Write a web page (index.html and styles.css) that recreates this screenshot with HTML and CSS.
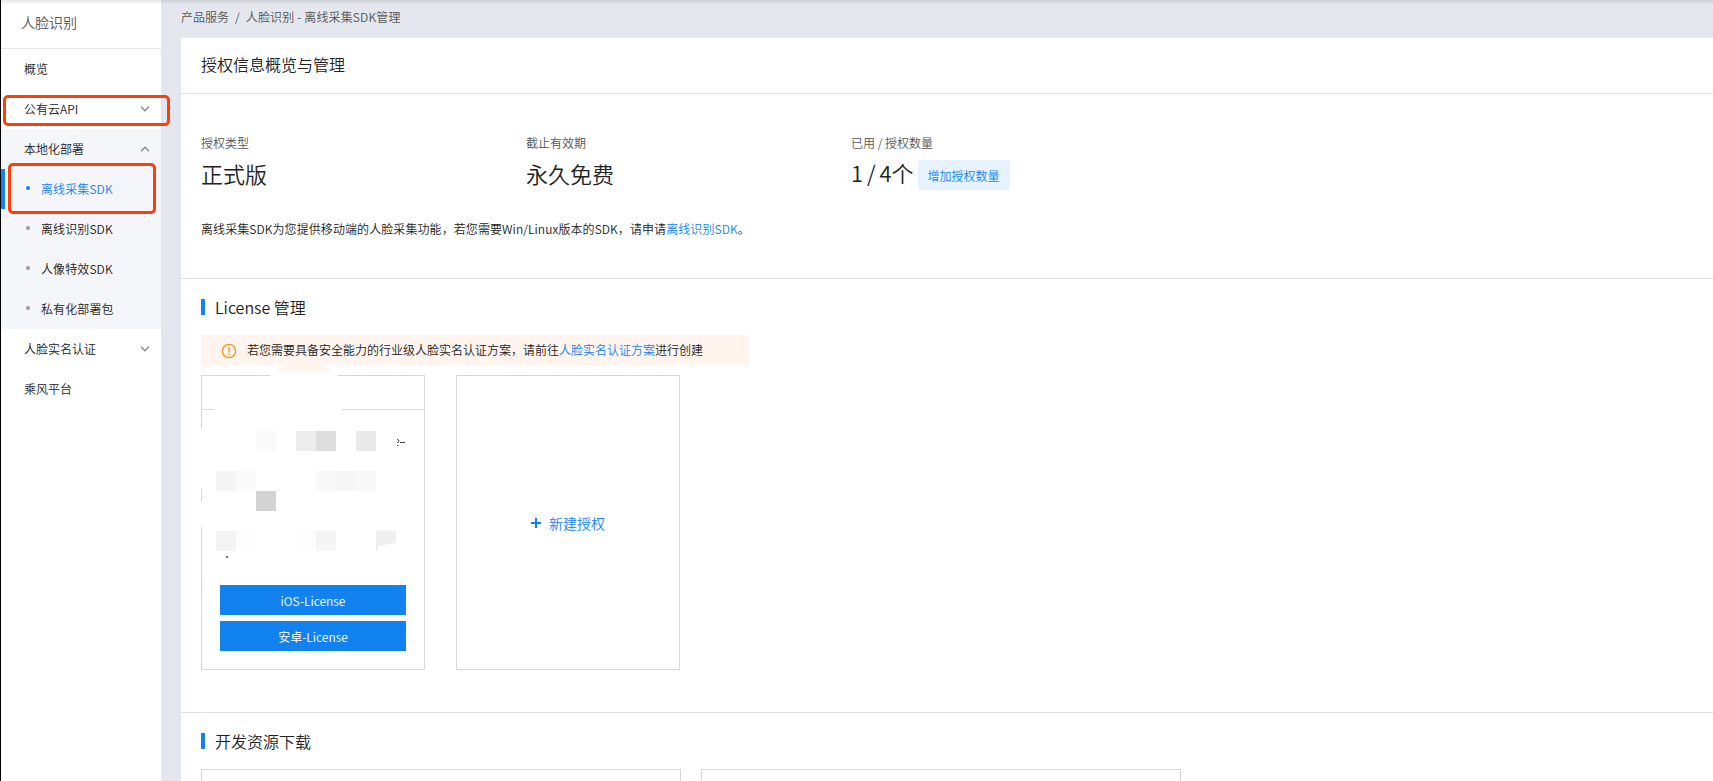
FILE: index.html
```html
<!DOCTYPE html>
<html lang="zh-CN">
<head>
    <meta charset="UTF-8">
    <meta name="viewport" content="width=device-width, initial-scale=1.0">
    <title>离线采集SDK管理</title>
    <link rel="stylesheet" href="styles.css">
</head>
<body>
    <div class="layout">
        <aside class="sidebar">
            <div class="sidebar-title">人脸识别</div>
            <ul class="menu">
                <li class="menu-item">概览</li>
                <li class="menu-item">公有云API
                    <svg class="arrow" width="10" height="6" viewBox="0 0 10 6"><path d="M1 0.8l4 4 4-4"/></svg>
                    <span class="mark mark-api"></span>
                </li>
                <li class="menu-group">
                    <div class="menu-item">本地化部署
                        <svg class="arrow" width="10" height="6" viewBox="0 0 10 6"><path d="M1 5.2l4-4 4 4"/></svg>
                    </div>
                    <ul class="submenu">
                        <li class="active">离线采集SDK<span class="mark mark-sdk"></span></li>
                        <li>离线识别SDK</li>
                        <li>人像特效SDK</li>
                        <li>私有化部署包</li>
                    </ul>
                </li>
                <li class="menu-item">人脸实名认证
                    <svg class="arrow" width="10" height="6" viewBox="0 0 10 6"><path d="M1 0.8l4 4 4-4"/></svg>
                </li>
                <li class="menu-item">乘风平台</li>
            </ul>
        </aside>

        <main class="main">
            <div class="breadcrumb"><span>产品服务</span><span>/</span><span class="current">人脸识别 - 离线采集SDK管理</span></div>
            <div class="content">
                <h2 class="page-title">授权信息概览与管理</h2>

                <section class="overview">
                    <div class="stats">
                        <div class="stat">
                            <div class="stat-label">授权类型</div>
                            <div class="stat-value">正式版</div>
                        </div>
                        <div class="stat">
                            <div class="stat-label">截止有效期</div>
                            <div class="stat-value">永久免费</div>
                        </div>
                        <div class="stat">
                            <div class="stat-label">已用 / 授权数量</div>
                            <div class="stat-value stat-count"><span class="count">1 / 4个</span><button class="btn-light">增加授权数量</button></div>
                        </div>
                    </div>
                    <p class="desc">离线采集SDK为您提供移动端的人脸采集功能，若您需要Win/Linux版本的SDK，请申请<a>离线识别SDK</a>。</p>
                </section>

                <section class="license">
                    <h3 class="section-title">License 管理</h3>
                    <div class="notice">
                        <svg class="notice-icon" width="16" height="16" viewBox="0 0 16 16">
                            <circle cx="8" cy="8" r="6.6"/>
                            <path d="M8 4v5.6M8 10.6v1.4"/>
                        </svg>
                        <span>若您需要具备安全能力的行业级人脸实名认证方案，请前往<a>人脸实名认证方案</a>进行创建</span>
                    </div>
                    <div class="cards">
                        <div class="card">
                            <div class="card-head"></div>
                            <!-- masked license info -->
                            <svg class="mask" width="224" height="220" viewBox="0 0 224 220">
                                <path fill="#fff" d="M69 10h68v4l4 20v14H13V34l56-16zM0 64h12v60H0zM0 137h12v25H0z"/>
                                <path fill="#fff5ee" d="M74 6C82 1 87 0 92 0h22c6 0 12 2 18 6z"/>
                                <g>
                                    <rect x="55" y="66" width="20" height="20" fill="#fafafa"/>
                                    <rect x="95" y="66" width="20" height="20" fill="#ededed"/>
                                    <rect x="115" y="66" width="20" height="20" fill="#dddddd"/>
                                    <rect x="155" y="66" width="20" height="20" fill="#e9e9e9"/>
                                    <rect x="15" y="106" width="20" height="20" fill="#f5f5f5"/>
                                    <rect x="35" y="106" width="20" height="20" fill="#fafafa"/>
                                    <rect x="115" y="106" width="20" height="20" fill="#f8f8f8"/>
                                    <rect x="135" y="106" width="20" height="20" fill="#f6f6f6"/>
                                    <rect x="155" y="106" width="20" height="20" fill="#f8f8f8"/>
                                    <rect x="55" y="126" width="20" height="20" fill="#d3d3d3"/>
                                    <rect x="15" y="166" width="20" height="20" fill="#f4f4f4"/>
                                    <rect x="35" y="166" width="20" height="20" fill="#fdfdfd"/>
                                    <rect x="95" y="166" width="20" height="20" fill="#fdfdfd"/>
                                    <rect x="115" y="166" width="20" height="20" fill="#f5f5f5"/>
                                    <path d="M175 166h20v12l-18 3v5h-2z" fill="#efefef"/>
                                </g>
                                <path d="M196 74.500h1l1 1.500-1 1.500h-1M196 80.500h1.500M199 77.500h5" fill="none" stroke="#444"/>
                                <rect x="25" y="191" width="2" height="2" fill="#777"/>
                            </svg>
                            <div class="card-actions">
                                <button class="btn-primary">iOS-License</button>
                                <button class="btn-primary">安卓-License</button>
                            </div>
                        </div>
                        <div class="card card-new">
                            <svg width="10" height="10" viewBox="0 0 10 10"><path d="M5 0v10M0 5h10"/></svg>
                            <span>新建授权</span>
                        </div>
                    </div>
                </section>

                <section class="download">
                    <h3 class="section-title">开发资源下载</h3>
                    <div class="resources">
                        <div class="resource"></div>
                        <div class="resource"></div>
                    </div>
                </section>
            </div>
        </main>
    </div>
</body>
</html>
```
FILE: styles.css
```css
* {
    box-sizing: border-box;
}
body {
    margin: 0;
    font-family: "Noto Sans CJK SC", sans-serif;
    font-size: 12px;
    font-weight: 350;
    color: #222;
    background-color: #e4e7ed;
    overflow: hidden;
}
ul, h2, h3, p {
    margin: 0;
    padding: 0;
    list-style: none;
    font-weight: inherit;
}
a {
    color: #1283ee;
}
button {
    border: none;
    padding: 0;
    font: inherit;
    cursor: pointer;
}
.layout {
    display: flex;
    height: 781px;
    border-left: 1px solid #000;
    overflow: hidden;
}
/* shadow of the top bar */
.layout::before {
    content: "";
    position: absolute;
    top: 0;
    left: 1px;
    right: 0;
    height: 5px;
    background: linear-gradient(rgba(0, 0, 0, 0.1), rgba(0, 0, 0, 0));
}

/* sidebar */
.sidebar {
    flex: 0 0 160px;
    background-color: #fff;
}
.sidebar-title {
    height: 49px;
    padding-left: 20px;
    line-height: 44px;
    font-size: 14px;
    color: #555;
    border-bottom: 1px solid #e4e7ed;
}
.menu-item {
    position: relative;
    display: flex;
    align-items: center;
    justify-content: space-between;
    height: 40px;
    padding: 0 11px 2px 23px;
}
.arrow {
    margin-top: 2px;
    fill: none;
    stroke: #888;
    stroke-width: 1.4;
}
.menu-group {
    background-color: #f4f6fa;
}
.submenu li {
    position: relative;
    display: flex;
    align-items: center;
    height: 40px;
    padding: 0 0 2px 25px;
    letter-spacing: 0.1px;
}
.submenu li::before {
    content: "";
    width: 4px;
    height: 4px;
    margin-right: 11px;
    border-radius: 50%;
    background-color: #999;
}
.submenu li.active {
    padding-left: 21px;
    color: #1283ee;
    border-left: 4px solid #1283ee;
}
.submenu li.active::before {
    background-color: #1283ee;
}
.mark {
    position: absolute;
    z-index: 2;
    border: 3px solid #ff3d0a;
    border-radius: 5px;
}
.mark-api {
    left: 2px;
    top: 6px;
    width: 167px;
    height: 31px;
}
.mark-sdk {
    left: 3px;
    top: -6px;
    width: 148px;
    height: 51px;
}

/* content */
.main {
    flex: 1;
    padding-left: 20px;
}
.breadcrumb {
    display: flex;
    gap: 6px;
    height: 38px;
    line-height: 33px;
    color: #555;
}
.current {
    letter-spacing: 0.15px;
}
.content {
    background-color: #fff;
}
.page-title {
    height: 56px;
    padding-left: 20px;
    line-height: 52px;
    font-size: 16px;
    border-bottom: 1px solid #e0e1e8;
}
.overview {
    height: 185px;
    padding: 39px 20px 0;
    border-bottom: 1px solid #e0e1e8;
}
.stats {
    display: flex;
}
.stat {
    width: 325px;
}
.stat-label {
    line-height: 20px;
    color: #555;
}
.stat-value {
    display: flex;
    align-items: center;
    height: 30px;
    margin-top: 5px;
    font-size: 22px;
}
.stat-count {
    margin-top: 7px;
}
.count {
    margin-top: -6px;
    word-spacing: -1px;
}
.btn-light {
    width: 92px;
    height: 30px;
    margin-left: 4px;
    font-size: 12px;
    color: #1283ee;
    background-color: #e6f3fe;
}
.desc {
    margin-top: 29px;
    line-height: 20px;
    letter-spacing: 0.08px;
}
.license {
    height: 434px;
    padding: 20px 20px 0;
    border-bottom: 1px solid #e0e1e8;
}
.section-title {
    display: flex;
    align-items: center;
    height: 16px;
    font-size: 16px;
}
.section-title::before {
    content: "";
    width: 4px;
    height: 16px;
    margin-right: 10px;
    background-color: #1283ee;
}
.notice {
    display: flex;
    align-items: center;
    width: 548px;
    height: 30px;
    margin-top: 20px;
    padding: 0 0 2px 20px;
    background-color: #fff5ee;
}
.notice-icon {
    margin: 4px 10px 0 0;
    fill: none;
    stroke: #f9931f;
    stroke-width: 1.3;
}
.cards {
    display: flex;
    gap: 31px;
    margin-top: 10px;
}
.card {
    position: relative;
    display: flex;
    flex-direction: column;
    justify-content: space-between;
    width: 224px;
    height: 295px;
    border: 1px solid #d5d6d8;
}
.card-head {
    height: 34px;
    border-bottom: 1px solid #dcdde2;
}
.mask {
    position: absolute;
    left: -1px;
    top: -11px;
}
.card-actions {
    display: flex;
    flex-direction: column;
    gap: 6px;
    padding: 0 18px 18px;
}
.btn-primary {
    height: 30px;
    color: #fff;
    background-color: #1283ee;
}
.card-new {
    flex-direction: row;
    align-items: center;
    justify-content: center;
    gap: 8px;
    font-size: 14px;
    color: #1283ee;
}
.card-new path {
    stroke: #1283ee;
    stroke-width: 2;
}
.download {
    padding: 20px 20px 0;
}
.resources {
    display: flex;
    gap: 20px;
    margin-top: 20px;
}
.resource {
    width: 480px;
    height: 160px;
    border: 1px solid #d5d6d8;
}
```
